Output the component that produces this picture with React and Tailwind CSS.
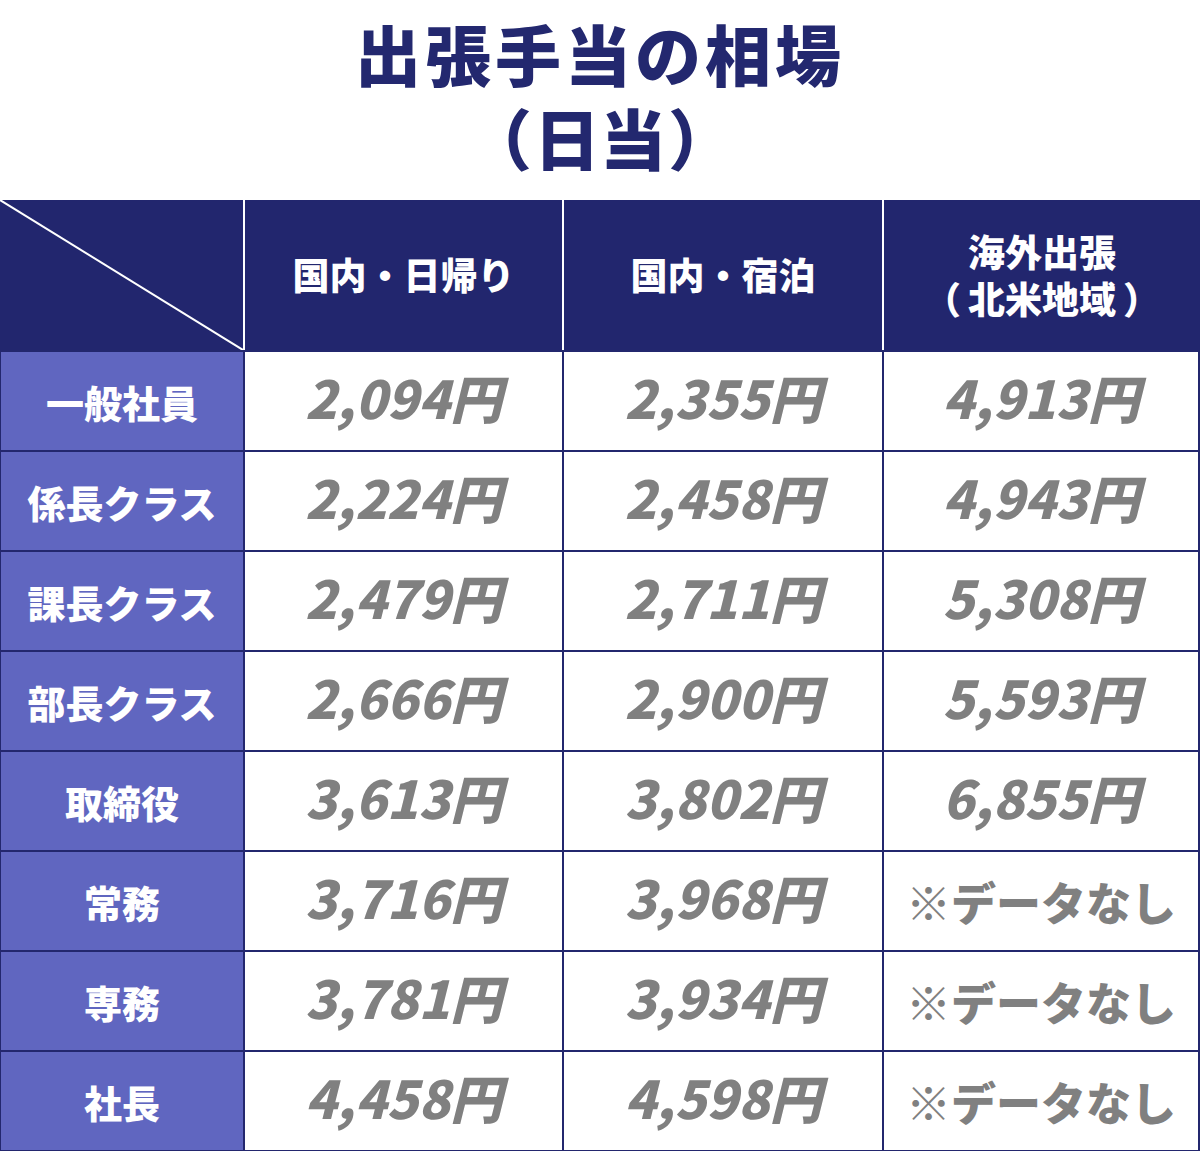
import React from 'react'

const font = { fontFamily: '"Noto Sans CJK JP", "Noto Sans", sans-serif' }

const rows = [
  ['一般社員', '2,094円', '2,355円', '4,913円'],
  ['係長クラス', '2,224円', '2,458円', '4,943円'],
  ['課長クラス', '2,479円', '2,711円', '5,308円'],
  ['部長クラス', '2,666円', '2,900円', '5,593円'],
  ['取締役', '3,613円', '3,802円', '6,855円'],
  ['常務', '3,716円', '3,968円', null],
  ['専務', '3,781円', '3,934円', null],
  ['社長', '4,458円', '4,598円', null],
]

const Value = ({ v }) =>
  v ? (
    <span className="text-[52px] leading-none font-black italic text-[#808080] mb-[8px]">{v}</span>
  ) : (
    <span className="text-[45px] leading-none font-black text-[#808080]">※データなし</span>
  )

export default function App() {
  return (
    <div className="w-[1200px] h-[1151px] bg-white" style={font}>
      {/* title */}
      <div className="h-[200px] flex flex-col items-center pt-[12px] text-[#23286f] font-black">
        <div className="text-[66px] leading-[80px] tracking-[4px]">出張手当の相場</div>
        <div className="text-[66px] leading-[88px]">
          （<span className="px-[2px]">日当</span>）
        </div>
      </div>

      {/* table */}
      <div className="border-b-2 border-[#23276e]">
        <div className="flex h-[150px] bg-[#22266e] text-white font-black text-[37px]">
          <div className="relative w-[243px]">
            <svg className="absolute inset-0" width="243" height="150">
              <line x1="0" y1="0" x2="243" y2="150" stroke="white" strokeWidth="2" />
            </svg>
          </div>
          <div className="w-[319px] border-l-2 border-white flex items-center justify-center">国内・日帰り</div>
          <div className="w-[320px] border-l-2 border-white flex items-center justify-center">国内・宿泊</div>
          <div className="flex-1 border-l-2 border-white flex flex-col items-center justify-center leading-[47px]">
            <div>海外出張</div>
            <div>
              （<span className="px-[7px]">北米地域</span>）
            </div>
          </div>
        </div>
        {rows.map(([label, a, b, c]) => (
          <div key={label} className="flex h-[100px] border-t-2 border-[#23276e]">
            <div className="w-[243px] bg-[#6066c0] border-l border-[#23276e] flex items-center justify-center text-white font-black text-[38px]">
              {label}
            </div>
            <div className="w-[319px] border-l-2 border-[#23276e] flex items-center justify-center">
              <Value v={a} />
            </div>
            <div className="w-[320px] border-l-2 border-[#23276e] flex items-center justify-center">
              <Value v={b} />
            </div>
            <div className="flex-1 border-x-2 border-[#23276e] flex items-center justify-center">
              <Value v={c} />
            </div>
          </div>
        ))}
      </div>
    </div>
  )
}
